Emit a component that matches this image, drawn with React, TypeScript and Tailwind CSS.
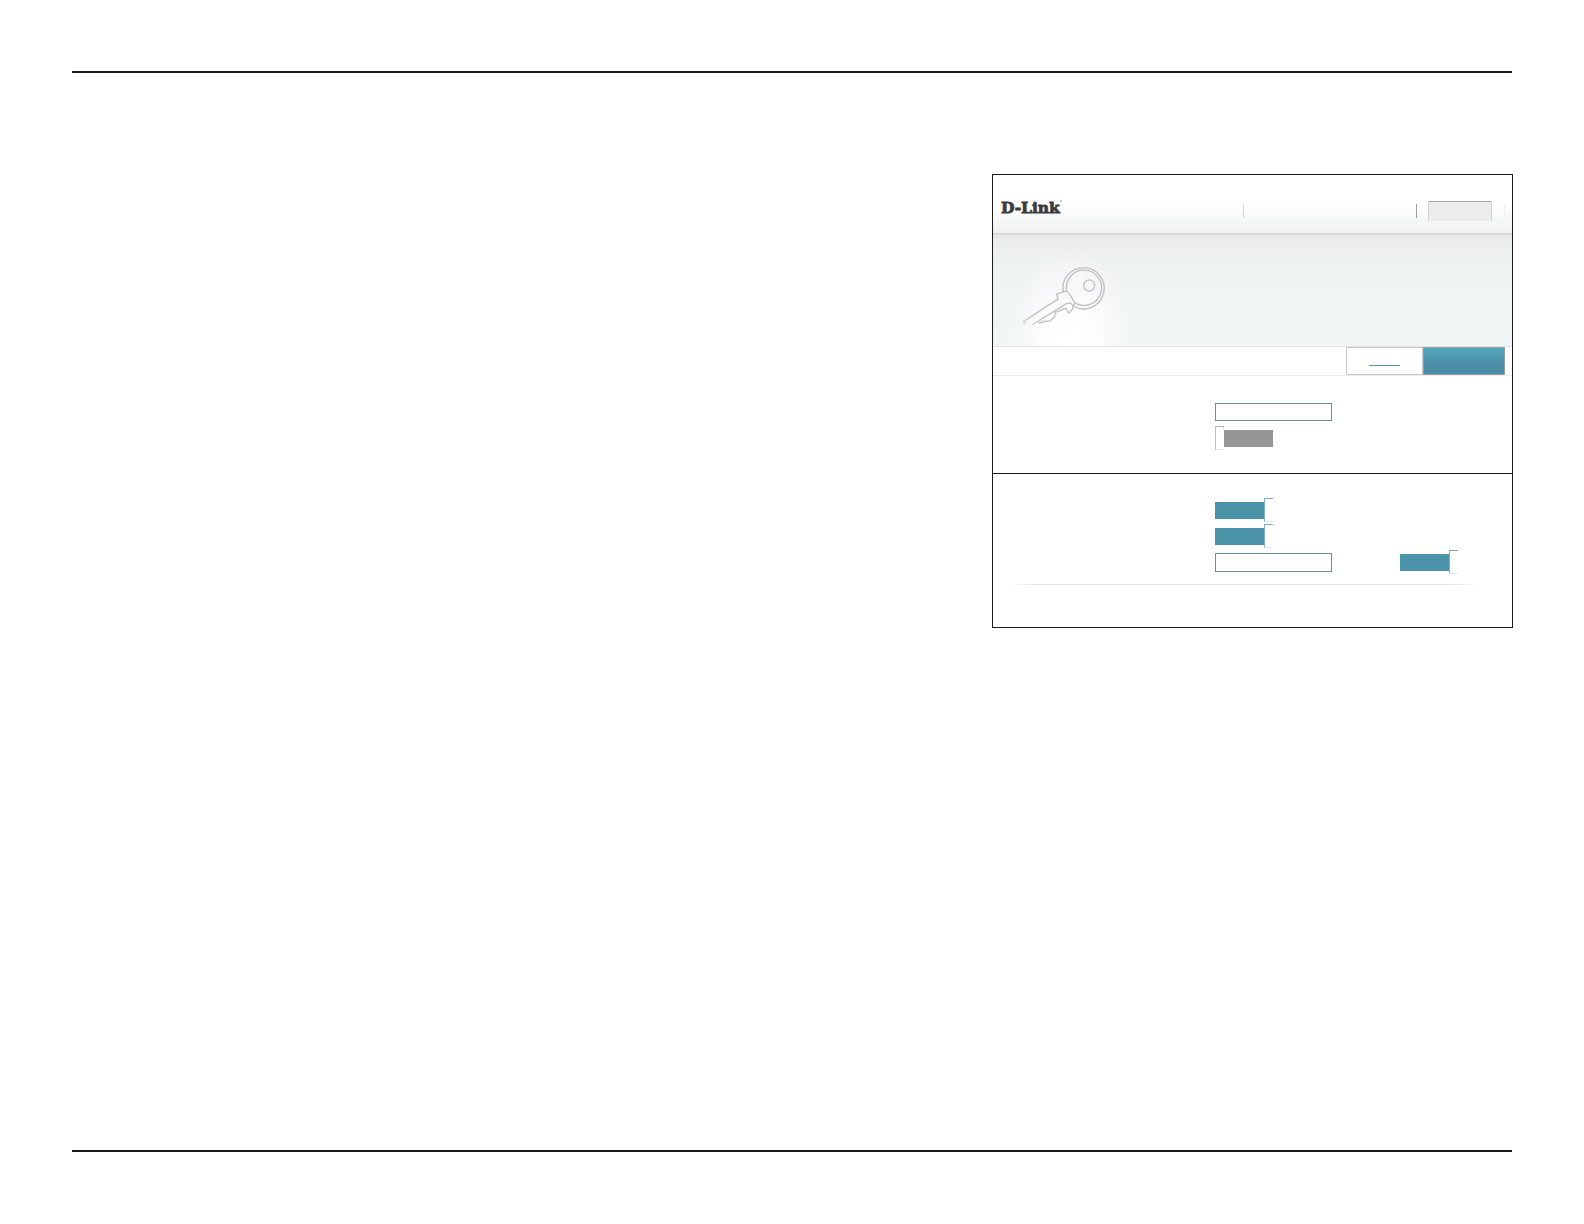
function KeyIcon() {
  return (
    <svg
      className="ml-[27px] mt-[31px] block h-[66px] w-[88px]"
      viewBox="106.5 102.5 264 198"
      fill="none"
      stroke="#c4c1c2"
      strokeWidth="4.2"
      strokeLinejoin="round"
      strokeLinecap="round"
    >
      <defs>
        <linearGradient id="blade" gradientUnits="userSpaceOnUse" x1="115" y1="285" x2="160" y2="255">
          <stop offset="0" stopColor="#c4c1c2" stopOpacity="0.6" />
          <stop offset="1" stopColor="#c4c1c2" />
        </linearGradient>
      </defs>
      <path d="M236 186 A62 62 0 1 1 266 229" />
      <path d="M246 181 A53 53 0 1 1 271 219" />
      <circle cx="314" cy="167" r="16.5" />
      <path d="M236 186 L216 193 L221 208 L192 226" />
      <path d="M192 226 L116 276 L123 281" stroke="url(#blade)" />
      <path d="M236 186 L247 184 L259 198 L271 220" />
      <path d="M271 220 L266 229 L263 240 L253 250 L243 235 L224 244 L213 247 L210 262 L197 273 L178 275" />
      <path d="M266 229 L258 219 L244 222 L229 232 L205 247 L180 262" />
      <path d="M180 262 L145 284 M178 275 L163 280" stroke="url(#blade)" />
    </svg>
  );
}

function Header() {
  return (
    <header className="flex h-[58px] items-start bg-linear-to-b from-white from-50% to-[#f0f1f1]">
      <div className="flex w-[250px] items-start pl-[8px] pt-[22px] text-[#3b3b3b]">
        <span
          className="text-[15.5px] leading-[21px] font-bold tracking-[-0.05px] [-webkit-text-stroke:0.8px_#3b3b3b]"
          style={{ fontFamily: '"DejaVu Serif", serif' }}
        >
          D-Link
        </span>
        <span className="mt-[3px] h-[2px] w-[2px] shrink-0 rounded-full bg-[#b5b5b5]" />
      </div>
      <div className="mt-[29px] h-[14px] w-px bg-[#d3d3d3]" />
      <div className="ml-[172px] mt-[29px] h-[14px] w-px bg-[#9b9b9b]" />
      <div className="ml-[11px] mt-[26px] h-[20px] w-[64px] rounded-t-[2px] border-x border-t border-x-[#d2d2d2] border-t-[#a5a5a5] bg-[#ededed]" />
      <div className="ml-[12px] mt-[29px] h-[14px] w-px bg-[#f0f0f0]" />
    </header>
  );
}

function Hero() {
  return (
    <section className="h-[114px] border-b border-[#dfe3e4] bg-[radial-gradient(ellipse_68px_100px_at_77px_116px,#ffffff_15%,#ffffffd0_40%,#ffffff60_70%,#ffffff00_100%),linear-gradient(to_bottom,#c8caca_0px,#d8dada_1px,#e2e5e5_2px,#eaecec_5px,#ecefef_14px,#f0f3f4_35px,#f1f5f6_100%)]">
      <div className="flex">
        <KeyIcon />
      </div>
    </section>
  );
}

function TabRow() {
  return (
    <nav className="flex h-[29px] items-start justify-end border-b border-[#ececec] pr-[7px]">
      <div className="flex h-[28px] w-[77px] justify-center border border-[#c8c8c8] bg-white pt-[17px]">
        <div className="h-px w-[31px] bg-[#5295a6]" />
      </div>
      <div className="h-[28px] w-[82px] border border-[#929da3] bg-linear-to-b from-[#53aabd] to-[#4a8ba5] to-65%" />
    </nav>
  );
}

function Field({ tall = false }: { tall?: boolean }) {
  return <div className={`${tall ? "h-[19px]" : "h-[18px]"} w-[117px] border border-[#5c92a3] bg-white`} />;
}

function SwitchOn() {
  return (
    <div className="flex h-[24px] w-[58px] items-start">
      <div className="mt-[4px] h-[17px] w-[49px] bg-[#4b93a9]" />
      <div className="h-[24px] w-[9px] border-y border-l border-t-[#7ba7b1] border-b-[#dceaec] border-l-[#80b4bf]" />
    </div>
  );
}

function SwitchOff() {
  return (
    <div className="flex h-[24px] w-[58px] items-start">
      <div className="flex h-[24px] w-[9px] items-start justify-end border-y border-l border-t-[#b0b0b0] border-b-[#e2e2e2] border-l-[#c2c2c2]">
        <div className="h-[3px] w-px bg-[#dddddd]" />
      </div>
      <div className="mt-[4px] h-[17px] w-[49px] bg-[#969696]" />
    </div>
  );
}

export default function App() {
  return (
    <main className="flex h-[1224px] w-[1584px] flex-col bg-white px-[72px] pt-[71px]">
      <div className="h-[2px] w-full shrink-0 bg-[#1c1a1b]" />
      <div className="-mr-px flex h-[1077px] shrink-0 items-start justify-end pt-[101px]">
        <div className="w-[521px] border border-[#1c1c1e]">
          <div className="h-[298px]">
            <Header />
            <Hero />
            <TabRow />
            <div className="flex flex-col gap-[5px] pl-[222px] pt-[27px]">
              <Field />
              <SwitchOff />
            </div>
          </div>
          <div className="h-[154px] border-t border-[#1c1c1e]">
            <div className="flex flex-col gap-[2px] pl-[222px] pt-[24px]">
              <SwitchOn />
              <SwitchOn />
              <div className="flex h-[24px] items-start gap-[68px]">
                <div className="pt-[3px]">
                  <Field tall />
                </div>
                <SwitchOn />
              </div>
            </div>
            <div className="ml-[18px] mt-[10px] h-px w-[468px] bg-[linear-gradient(to_right,#ffffff,#e2e2e2_5%,#e2e2e2_94%,#ffffff)]" />
          </div>
        </div>
      </div>
      <div className="h-[2px] w-full shrink-0 bg-[#1c1a1b]" />
    </main>
  );
}
